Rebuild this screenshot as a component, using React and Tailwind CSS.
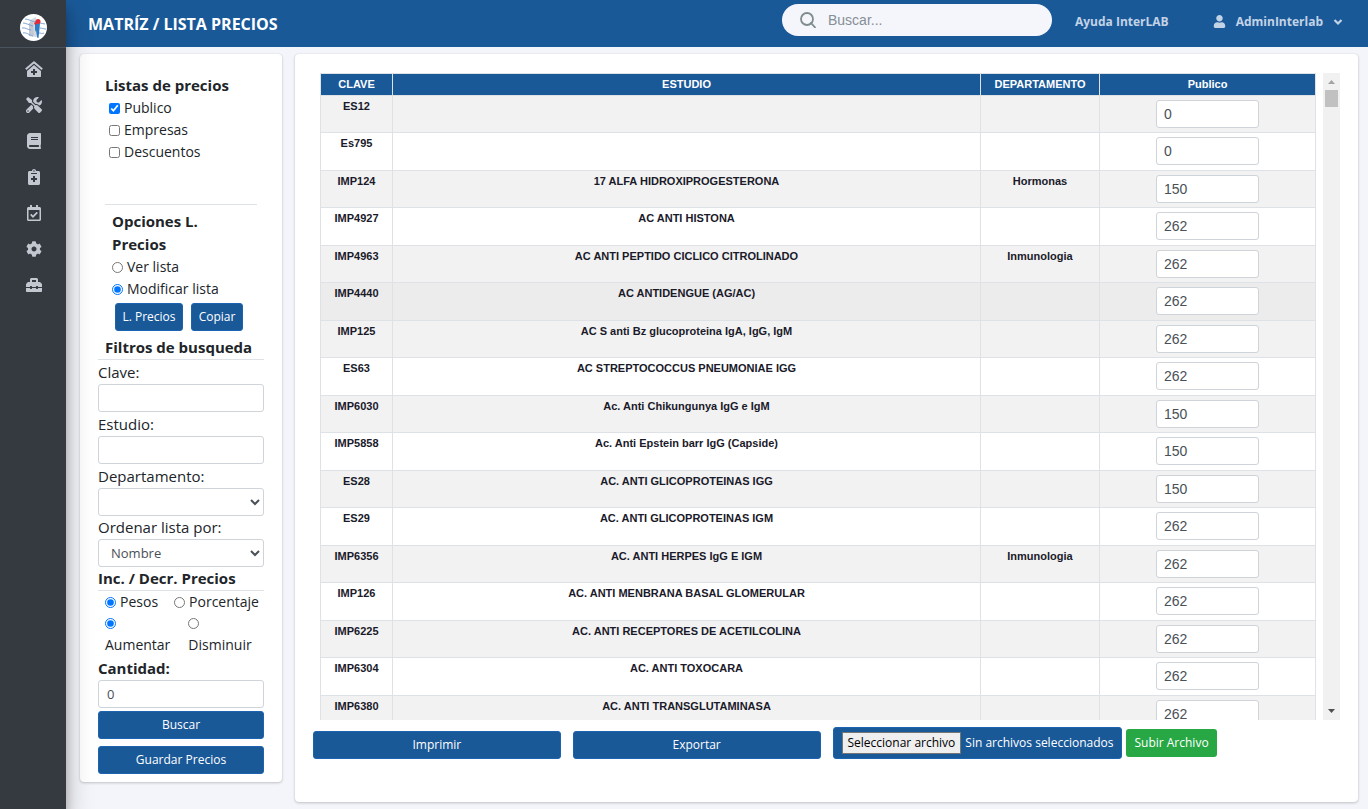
import React, { useState } from 'react';
import {
  FaBook,
  FaCog,
  FaNotesMedical,
  FaRegCalendarCheck,
  FaToolbox,
  FaTools,
  FaUser,
} from 'react-icons/fa';

const ClinicIcon = ({ className }) => (
  <svg viewBox="0 0 18 16" className={className} aria-hidden="true">
    <path d="M0.800 8.300L9 1.200l8.200 7.100" fill="none" stroke="currentColor" strokeWidth="2" strokeLinejoin="round" />
    <path
      d="M9 3.900l7 6V15.500a.6.6 0 0 1-.6.500H2.600a.6.6 0 0 1-.6-.5V9.900zM8 8v2H6v2h2v2h2v-2h2v-2h-2V8z"
      fill="currentColor"
      fillRule="evenodd"
    />
  </svg>
);

const menuItems = [
  { label: 'Inicio', Icon: ClinicIcon },
  { label: 'Herramientas', Icon: FaTools },
  { label: 'Catalogos', Icon: FaBook },
  { label: 'Recepcion', Icon: FaNotesMedical },
  { label: 'Agenda', Icon: FaRegCalendarCheck },
  { label: 'Configuracion', Icon: FaCog },
  { label: 'Utilerias', Icon: FaToolbox },
];

const estudios = [
  { clave: 'ES12', estudio: '', departamento: '', publico: '0' },
  { clave: 'Es795', estudio: '', departamento: '', publico: '0' },
  { clave: 'IMP124', estudio: '17 ALFA HIDROXIPROGESTERONA', departamento: 'Hormonas', publico: '150' },
  { clave: 'IMP4927', estudio: 'AC ANTI HISTONA', departamento: '', publico: '262' },
  { clave: 'IMP4963', estudio: 'AC ANTI PEPTIDO CICLICO CITROLINADO', departamento: 'Inmunologia', publico: '262' },
  { clave: 'IMP4440', estudio: 'AC ANTIDENGUE (AG/AC)', departamento: '', publico: '262' },
  { clave: 'IMP125', estudio: 'AC S anti Bz glucoproteina IgA, IgG, IgM', departamento: '', publico: '262' },
  { clave: 'ES63', estudio: 'AC STREPTOCOCCUS PNEUMONIAE IGG', departamento: '', publico: '262' },
  { clave: 'IMP6030', estudio: 'Ac. Anti Chikungunya IgG e IgM', departamento: '', publico: '150' },
  { clave: 'IMP5858', estudio: 'Ac. Anti Epstein barr IgG (Capside)', departamento: '', publico: '150' },
  { clave: 'ES28', estudio: 'AC. ANTI GLICOPROTEINAS IGG', departamento: '', publico: '150' },
  { clave: 'ES29', estudio: 'AC. ANTI GLICOPROTEINAS IGM', departamento: '', publico: '262' },
  { clave: 'IMP6356', estudio: 'AC. ANTI HERPES IgG E IGM', departamento: 'Inmunologia', publico: '262' },
  { clave: 'IMP126', estudio: 'AC. ANTI MENBRANA BASAL GLOMERULAR', departamento: '', publico: '262' },
  { clave: 'IMP6225', estudio: 'AC. ANTI RECEPTORES DE ACETILCOLINA', departamento: '', publico: '262' },
  { clave: 'IMP6304', estudio: 'AC. ANTI TOXOCARA', departamento: '', publico: '262' },
  { clave: 'IMP6380', estudio: 'AC. ANTI TRANSGLUTAMINASA', departamento: '', publico: '262' },
];

const buttonClass = 'h-7 rounded-[3px] border border-[#1d64b0] bg-[#1a5998] text-xs leading-none text-white';
const fieldClass = 'block h-7 w-full rounded-[3px] border border-[#ced4da] bg-white px-2 text-[13px] text-[#495057]';
const titleClass = 'text-[15px] leading-[23px] font-bold';

const Logo = () => (
  <svg viewBox="0 0 27 27" className="size-[27px]" aria-hidden="true">
    <circle cx="13.5" cy="13.5" r="13.5" fill="#fff" />
    <path d="M10 6l6-3 1 16-1 4-7-1z" fill="#d5d9e0" />
    <path d="M9 9l4-2 1 14-5 1z" fill="#c3c9d3" />
    <path
      d="M5 5c4 0 7 3 12 3M3 9c3 0 6 2 10 3M2 14c3-1 6 2 9 2M3 19c3-1 6 2 10 3M20 9c2 0 3 1 5 1M20 14c2 0 3 1 6 1M19 19c2 0 3 1 5 0"
      fill="none"
      stroke="#6f9bd1"
      strokeWidth="0.9"
    />
    <path d="M15 10l5-1-.5 6-1 9-1.500-.5-1-7.500-1 2z" fill="#2f7cc4" />
    <circle cx="18" cy="7.5" r="2.5" fill="#e02c38" />
    <path d="M14 9l3-2 1 2-3 2z" fill="#e02c38" />
  </svg>
);

const Sidebar = () => (
  <aside className="z-10 flex w-[66px] shrink-0 flex-col bg-[#343a40] shadow-[0_14px_28px_rgba(0,0,0,0.25),0_10px_10px_rgba(0,0,0,0.22)]">
    <a href="#inicio" aria-label="InterLAB" className="flex h-12 items-end justify-center border-b border-[#4b545c] pb-[6px]">
      <Logo />
    </a>
    <nav className="flex flex-col pt-[3px] pl-[2px]">
      {menuItems.map(({ label, Icon }) => (
        <a key={label} href="#menu" aria-label={label} className="flex h-9 items-center justify-center text-[#c2c7d0]">
          <Icon className="h-4 w-auto" />
        </a>
      ))}
    </nav>
  </aside>
);

const Header = () => (
  <header className="flex h-[47px] shrink-0 items-center bg-[#1a5998] pr-[25px] pl-[22px]">
    <h1 className="flex-1 text-base font-bold text-white">MATRÍZ / LISTA PRECIOS</h1>
    <label className="mr-[23px] mb-[7px] flex h-8 w-[270px] items-center gap-3 rounded-full bg-[#f5f6fc] pl-[18px]">
      <svg viewBox="0 0 16 16" className="size-4 shrink-0" fill="none" stroke="#7f8c8d" strokeWidth="1.8" aria-hidden="true">
        <circle cx="7" cy="7" r="6" />
        <path d="M11 11l4 4.300" strokeLinecap="round" />
      </svg>
      <input
        type="search"
        aria-label="Buscar"
        placeholder="Buscar..."
        className="w-full bg-transparent font-['Liberation_Sans',sans-serif] text-sm outline-none placeholder:text-[#868e96]"
      />
    </label>
    <a href="#ayuda" className="mr-11 pb-1 text-xs font-bold text-[#c3d3e6]">Ayuda InterLAB</a>
    <button className="flex items-center gap-[10px] pb-1 text-xs font-bold text-[#c3d3e6]">
      <FaUser size={13} />
      AdminInterlab
      <svg viewBox="0 0 10 8" className="h-2 w-[10px]" fill="none" stroke="currentColor" strokeWidth="2.2" aria-hidden="true">
        <path d="M1.500 2L5 5.500 8.500 2" />
      </svg>
    </button>
  </header>
);

const Choice = ({ label, ...props }) => (
  <label className="flex h-[22px] items-center gap-1 text-sm">
    <input className="size-[11px] shrink-0" {...props} />
    {label}
  </label>
);

const PricePanel = () => {
  const [modo, setModo] = useState('modificar');
  const [unidad, setUnidad] = useState('pesos');
  const [operacion, setOperacion] = useState('aumentar');
  const [cantidad, setCantidad] = useState('0');

  return (
    <section className="w-[202px] shrink-0 rounded bg-white px-[18px] pt-5 pb-2 text-[#212529] shadow-[0_0_1px_rgba(0,0,0,0.13),0_1px_3px_rgba(0,0,0,0.2)]">
      <div className="mx-[7px] border-b border-[#dee2e6] pb-[41px]">
        <h2 className={titleClass}>Listas de precios</h2>
        <div className="pl-1">
          <Choice type="checkbox" label="Publico" defaultChecked />
          <Choice type="checkbox" label="Empresas" />
          <Choice type="checkbox" label="Descuentos" />
        </div>
      </div>

      <div className="px-[14px] pt-[5px]">
        <h2 className={`${titleClass} w-24`}>Opciones L. Precios</h2>
        <Choice type="radio" name="modo" label="Ver lista" checked={modo === 'ver'} onChange={() => setModo('ver')} />
        <Choice type="radio" name="modo" label="Modificar lista" checked={modo === 'modificar'} onChange={() => setModo('modificar')} />
        <div className="flex gap-2 pt-[3px] pl-[3px]">
          <button className={`${buttonClass} w-[68px] shrink-0`}>L. Precios</button>
          <button className={`${buttonClass} w-[52px] shrink-0`}>Copiar</button>
        </div>
      </div>

      <h2 className={`${titleClass} mt-[5px] border-b border-[#dee2e6] pl-[7px]`}>Filtros de busqueda</h2>
      <label htmlFor="clave" className="block text-[15px] leading-6">Clave:</label>
      <input id="clave" type="text" className={fieldClass} />
      <label htmlFor="estudio" className="block text-[15px] leading-6">Estudio:</label>
      <input id="estudio" type="text" className={fieldClass} />
      <label htmlFor="departamento" className="block text-[15px] leading-6">Departamento:</label>
      <select id="departamento" className={fieldClass} />
      <label htmlFor="orden" className="block text-[15px] leading-[23px]">Ordenar lista por:</label>
      <select id="orden" className={fieldClass} defaultValue="Nombre">
        <option>Nombre</option>
        <option>Clave</option>
      </select>

      <h2 className={`${titleClass} border-b border-[#dee2e6]`}>Inc. / Decr. Precios</h2>
      <div className="flex gap-4 pl-[7px]">
        <Choice type="radio" name="unidad" label="Pesos" checked={unidad === 'pesos'} onChange={() => setUnidad('pesos')} />
        <Choice type="radio" name="unidad" label="Porcentaje" checked={unidad === 'porcentaje'} onChange={() => setUnidad('porcentaje')} />
      </div>
      <div className="flex gap-[18px] pl-[7px] text-sm leading-[22px]">
        <label className="flex flex-col">
          <input type="radio" name="operacion" className="my-[5px] size-[11px]" checked={operacion === 'aumentar'} onChange={() => setOperacion('aumentar')} />
          Aumentar
        </label>
        <label className="flex flex-col">
          <input type="radio" name="operacion" className="my-[5px] size-[11px]" checked={operacion === 'disminuir'} onChange={() => setOperacion('disminuir')} />
          Disminuir
        </label>
      </div>
      <label htmlFor="cantidad" className="block text-[15px] leading-6 font-bold">Cantidad:</label>
      <input id="cantidad" type="text" value={cantidad} onChange={(e) => setCantidad(e.target.value)} className={fieldClass} />
      <button className={`${buttonClass} mt-[3px] w-full`}>Buscar</button>
      <button className={`${buttonClass} mt-[7px] w-full`}>Guardar Precios</button>
    </section>
  );
};

const PriceTable = () => {
  const [rows, setRows] = useState(estudios);

  const handleChange = (index, value) => {
    setRows(rows.map((row, i) => (i === index ? { ...row, publico: value } : row)));
  };

  return (
    <div className="flex h-[80vh] gap-[7px]">
      <div className="flex-1 overflow-y-auto [scrollbar-width:none]">
        <table className="w-full table-fixed border-collapse text-center font-['Liberation_Sans',sans-serif] text-[11px] font-bold text-[#1a1a2a]">
          <thead>
            <tr className="h-[22px] bg-[#1a5998] text-white">
              <th className="w-[72px] border border-[#dee2e6]">CLAVE</th>
              <th className="border border-[#dee2e6]">ESTUDIO</th>
              <th className="w-[119px] border border-[#dee2e6]">DEPARTAMENTO</th>
              <th className="w-[216px] border border-[#dee2e6]">Publico</th>
            </tr>
          </thead>
          <tbody>
            {rows.map((row, i) => (
              <tr
                key={row.clave}
                className={`h-[37px] align-top leading-4 even:h-[38px] hover:bg-[#ececec] ${row.clave === 'IMP4440' ? 'bg-[#ececec]' : 'odd:bg-[#f2f2f2]'}`}
              >
                <td className="border border-[#dee2e6] pt-[2px]">{row.clave}</td>
                <td className="border border-[#dee2e6] pt-[2px]">{row.estudio}</td>
                <td className="border border-[#dee2e6] pt-[2px]">{row.departamento}</td>
                <td className="border border-[#dee2e6] pt-1">
                  <input
                    type="text"
                    aria-label={`Publico ${row.clave}`}
                    value={row.publico}
                    onChange={(e) => handleChange(i, e.target.value)}
                    className="mx-auto block h-7 w-[103px] rounded-[3px] border border-[#ced4da] bg-white px-[7px] text-sm font-normal text-[#495057]"
                  />
                </td>
              </tr>
            ))}
          </tbody>
        </table>
      </div>
      <div className="flex w-[17px] flex-col items-center bg-[#f1f1f1]" aria-hidden="true">
        <svg viewBox="0 0 17 17" className="size-[17px]">
          <path d="M5 11h7L8.500 7z" fill="#a3a3a3" />
        </svg>
        <div className="h-[17px] w-[13px] bg-[#c1c1c1]" />
        <svg viewBox="0 0 17 17" className="mt-auto size-[17px]">
          <path d="M5 6h7l-3.500 4z" fill="#505050" />
        </svg>
      </div>
    </div>
  );
};

const App = () => (
  <div className="flex min-h-screen bg-[#f4f5fa] font-['Open_Sans','Noto_Sans',sans-serif]">
    <Sidebar />
    <div className="flex min-w-0 flex-1 flex-col">
      <Header />
      <main className="flex flex-1 items-start gap-[13px] pt-[7px] pr-[10px] pb-[7px] pl-[14px]">
        <PricePanel />
        <section className="min-w-0 flex-1 self-stretch rounded bg-white pt-[19px] shadow-[0_0_1px_rgba(0,0,0,0.13),0_1px_3px_rgba(0,0,0,0.2)]">
          <div className="pr-[18px] pl-[25px]">
            <PriceTable />
          </div>
          <div className="mx-3 flex pt-[7px]">
            <div className="w-1/4 px-[6px] pt-1">
              <button className={`${buttonClass} w-full`}>Imprimir</button>
            </div>
            <div className="w-1/4 px-[6px] pt-1">
              <button className={`${buttonClass} w-full`}>Exportar</button>
            </div>
            <div className="flex flex-1 items-center gap-1 pl-[6px] text-xs whitespace-nowrap text-white">
              <label className="flex h-8 items-center gap-1 rounded-[3px] border border-[#1d64b0] bg-[#1a5998] px-2">
                <input type="file" className="sr-only" />
                <span className="border border-[#767676] bg-[#efefef] px-[5px] leading-5 text-black">Seleccionar archivo</span>
                Sin archivos seleccionados
              </label>
              <button className="h-7 rounded-[3px] bg-[#28a745] px-2">Subir Archivo</button>
            </div>
          </div>
        </section>
      </main>
    </div>
  </div>
);

export default App;
